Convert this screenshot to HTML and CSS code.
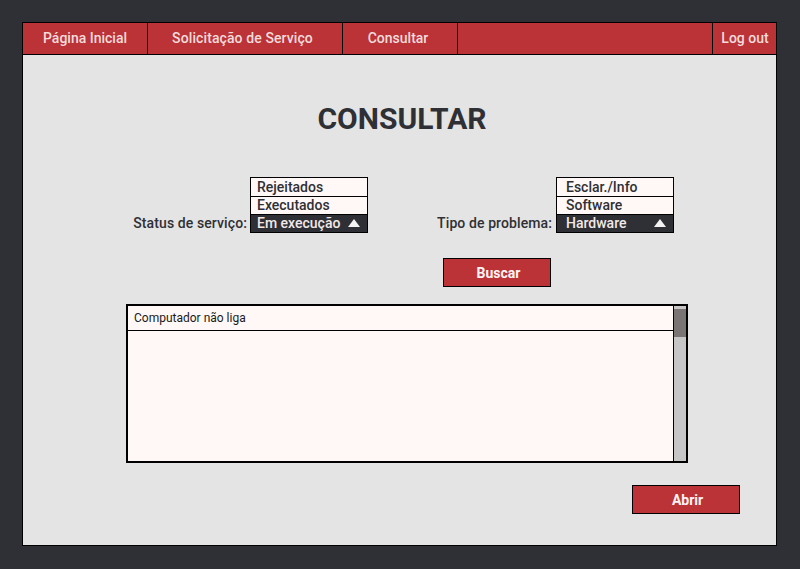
FILE: index.html
```html
<!DOCTYPE html>
<html lang="pt">
<head>
<meta charset="utf-8">
<title>Consultar</title>
<link rel="stylesheet" href="styles.css">
</head>
<body>
<div class="panel">
  <nav class="nav">
    <a class="nav-item w1">Página Inicial</a>
    <a class="nav-item w2">Solicitação de Serviço</a>
    <a class="nav-item w3">Consultar</a>
    <span class="nav-item spacer"></span>
    <a class="nav-item w4">Log out</a>
  </nav>
  <main class="content">
    <h1 class="title">CONSULTAR</h1>
    <div class="filters">
      <div class="filter f1">
        <span class="label">Status de serviço:</span>
        <div class="dropdown">
          <div class="opt">Rejeitados</div>
          <div class="opt">Executados</div>
          <div class="opt selected">Em execução<span class="tri"></span></div>
        </div>
      </div>
      <div class="filter f2">
        <span class="label">Tipo de problema:</span>
        <div class="dropdown">
          <div class="opt pad2">Esclar./Info</div>
          <div class="opt pad2">Software</div>
          <div class="opt selected pad2">Hardware<span class="tri"></span></div>
        </div>
      </div>
    </div>
    <button class="btn buscar">Buscar</button>
    <div class="results">
      <div class="list">
        <div class="row">Computador não liga</div>
      </div>
      <div class="scrollbar"><div class="thumb"></div></div>
    </div>
    <div class="actions">
      <button class="btn abrir">Abrir</button>
    </div>
  </main>
</div>
</body>
</html>
```
FILE: styles.css
```css
* { box-sizing: border-box; }
html, body { margin: 0; }
body {
  background: #2f3035;
  padding: 22px;
  font-family: Roboto, "Liberation Sans", sans-serif;
}
.panel {
  width: 755px;
  height: 524px;
  border: 1px solid #000;
  background: #e4e4e4;
  display: flex;
  flex-direction: column;
}
.nav {
  display: flex;
  height: 32px;
  background: #bb3237;
  border-bottom: 1px solid #000;
}
.nav-item {
  display: flex;
  align-items: center;
  justify-content: center;
  color: #f3dcdc;
  font-size: 14px;
  font-weight: 500;
  border-right: 1px solid #000;
  padding-bottom: 1px;
  white-space: nowrap;
}
.w1 { width: 125px; }
.w2 { width: 195px; padding-right: 5px; letter-spacing: 0.1px; }
.w3 { width: 115px; padding-right: 4px; }
.spacer { flex: 1; }
.w4 { width: 63px; border-right: none; padding-left: 1px; }
.content {
  flex: 1;
  display: flex;
  flex-direction: column;
}
.title {
  margin: 47px 0 0;
  text-align: center;
  font-size: 30px;
  line-height: 34px;
  font-weight: 700;
  color: #2f3035;
  padding-left: 5px;
}
.filters {
  display: flex;
  margin-top: 41px;
  padding-left: 110px;
  gap: 70px;
}
.filter {
  display: flex;
  align-items: flex-end;
  justify-content: flex-end;
}
.f1 { width: 235px; gap: 3px; }
.f2 { width: 236px; gap: 4px; }
.label {
  font-size: 14px;
  font-weight: 500;
  color: #2f3035;
  line-height: 18px;
  padding-bottom: 1px;
  letter-spacing: 0.1px;
  white-space: nowrap;
}
.dropdown {
  width: 118px;
  flex: none;
  border: 1px solid #000;
  background: #fff8f7;
}
.opt {
  height: 18px;
  line-height: 18px;
  font-size: 14px;
  font-weight: 500;
  color: #2f3035;
  padding-left: 6px;
  white-space: nowrap;
}
.opt + .opt { border-top: 1px solid #000; line-height: 17px; }
.pad2 { padding-left: 9px; }
.opt.selected {
  background: #2f3035;
  color: #f3e8e8;
  display: flex;
  align-items: center;
  justify-content: space-between;
  padding-right: 7px;
}
.tri {
  width: 0;
  height: 0;
  border-left: 6px solid transparent;
  border-right: 6px solid transparent;
  border-bottom: 8px solid #f3f3f3;
  margin-top: -1px;
}
.btn {
  font-family: Roboto, "Liberation Sans", sans-serif;
  font-size: 14px;
  font-weight: 700;
  color: #fff4f4;
  background: #bb3237;
  border: 1px solid #000;
  width: 108px;
  height: 29px;
  padding: 0 0 0 3px;
  cursor: pointer;
}
.buscar {
  margin-top: 25px;
  margin-left: 420px;
}
.results {
  margin-top: 17px;
  margin-left: 103px;
  width: 562px;
  height: 159px;
  border: 2px solid #000;
  display: flex;
  background: #fff8f7;
}
.list { flex: 1; }
.row {
  height: 25px;
  border-bottom: 1px solid #000;
  font-size: 12px;
  line-height: 24px;
  padding-left: 6px;
  color: #1a1a1a;
}
.scrollbar {
  width: 13px;
  border-left: 1px solid #000;
  background: #c6c6c6;
  padding-top: 3px;
}
.thumb {
  height: 28px;
  background: #7a7474;
}
.actions {
  display: flex;
  justify-content: flex-end;
  margin-top: 22px;
  padding-right: 36px;
}
```
